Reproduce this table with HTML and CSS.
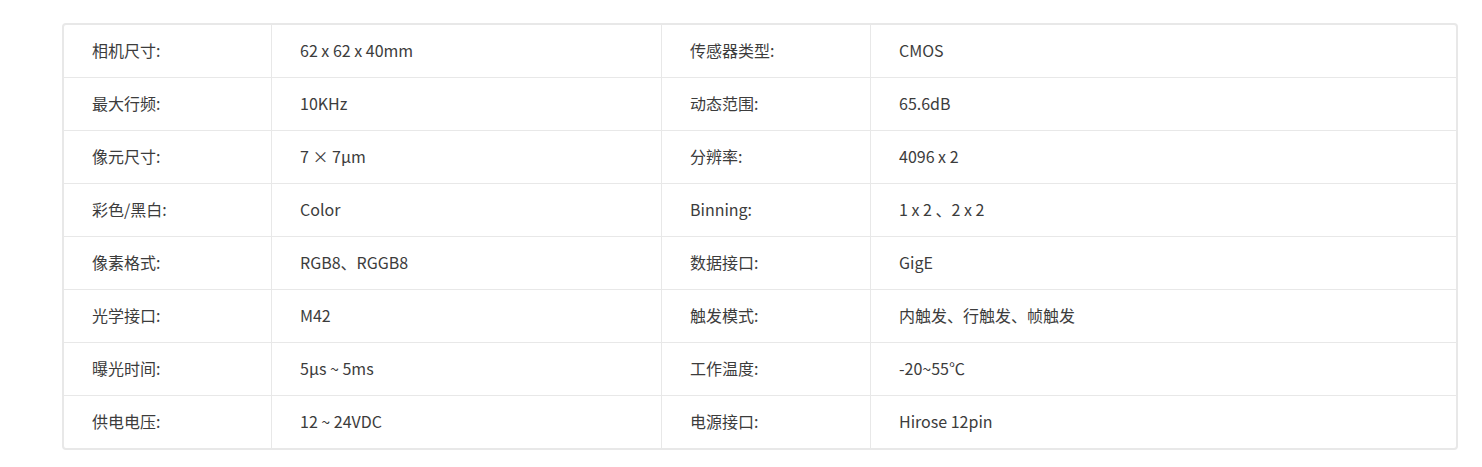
FILE: index.html
```html
<!DOCTYPE html>
<html lang="zh">
<head>
<meta charset="utf-8">
<link rel="stylesheet" href="styles.css">
</head>
<body>
<div class="spec">
  <div class="row"><div class="cell">相机尺寸:</div><div class="cell">62 x 62 x 40mm</div><div class="cell">传感器类型:</div><div class="cell">CMOS</div></div>
  <div class="row"><div class="cell">最大行频:</div><div class="cell">10KHz</div><div class="cell">动态范围:</div><div class="cell">65.6dB</div></div>
  <div class="row"><div class="cell">像元尺寸:</div><div class="cell">7 × 7μm</div><div class="cell">分辨率:</div><div class="cell">4096 x 2</div></div>
  <div class="row"><div class="cell">彩色/黑白:</div><div class="cell">Color</div><div class="cell">Binning:</div><div class="cell">1 x 2 、2 x 2</div></div>
  <div class="row"><div class="cell">像素格式:</div><div class="cell">RGB8、RGGB8</div><div class="cell">数据接口:</div><div class="cell">GigE</div></div>
  <div class="row"><div class="cell">光学接口:</div><div class="cell">M42</div><div class="cell">触发模式:</div><div class="cell">内触发、行触发、帧触发</div></div>
  <div class="row"><div class="cell">曝光时间:</div><div class="cell">5μs ~ 5ms</div><div class="cell">工作温度:</div><div class="cell">-20~55℃</div></div>
  <div class="row"><div class="cell">供电电压:</div><div class="cell">12 ~ 24VDC</div><div class="cell">电源接口:</div><div class="cell">Hirose 12pin</div></div>
</div>
</body>
</html>
```
FILE: styles.css
```css
html, body {
  margin: 0;
  padding: 0;
  background: #fff;
}
body {
  padding: 23px 24px 0 62px;
  font-family: "Noto Sans CJK SC", "Noto Sans", sans-serif;
  font-size: 16px;
  color: #3c3c3c;
}
.spec {
  border: 2px solid #e8e8e8;
  border-radius: 4px;
  width: 1392px;
}
.row {
  display: grid;
  grid-template-columns: 208px 390px 209px 1fr;
  height: 53px;
  border-bottom: 1px solid #e8e8e8;
  box-sizing: border-box;
}
.row:last-child {
  border-bottom: none;
  height: 52px;
}
.cell {
  display: flex;
  align-items: center;
  padding-left: 28px;
  padding-bottom: 2px;
  border-right: 1px solid #e8e8e8;
}
.cell:last-child {
  border-right: none;
}
```
